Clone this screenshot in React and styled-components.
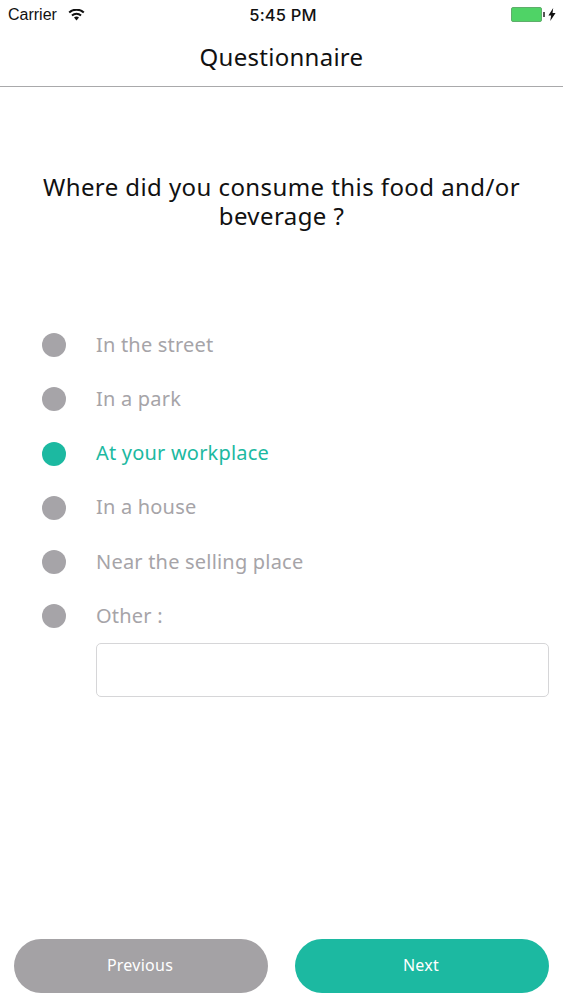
import styled, { createGlobalStyle } from "styled-components";

const options = [
  { label: "In the street" },
  { label: "In a park" },
  { label: "At your workplace", active: true },
  { label: "In a house" },
  { label: "Near the selling place" },
  { label: "Other :" },
];

export default function App() {
  return (
    <>
      <GlobalStyle />
      <Page>
        <StatusBar>
          <StatusLeft>
            Carrier
            <svg width="17" height="12" viewBox="0 0 17 12">
              <path d="M8.5 11.5 6 8.6a3.6 3.6 0 0 1 5 0zM4.6 7.2 3.3 5.7a7.8 7.8 0 0 1 10.4 0l-1.3 1.5a5.8 5.8 0 0 0-7.8 0zM1.9 4.2.5 2.7a12 12 0 0 1 16 0l-1.4 1.5a10 10 0 0 0-13.2 0z" fill="#111" />
            </svg>
          </StatusLeft>
          <StatusTime>5:45 PM</StatusTime>
          <StatusRight>
            <Battery />
            <BatteryTip />
            <svg width="8" height="13" viewBox="0 0 7 12">
              <path d="M4.6 0 0.2 6.9h2.5L1.9 12 6.8 4.7H4z" fill="#111" />
            </svg>
          </StatusRight>
        </StatusBar>
        <Header>Questionnaire</Header>
        <Question>Where did you consume this food and/or beverage ?</Question>
        <OptionList>
          {options.map((o) => (
            <Option key={o.label}>
              <Dot $active={o.active} />
              <OptionLabel $active={o.active}>{o.label}</OptionLabel>
            </Option>
          ))}
        </OptionList>
        <OtherInput />
        <Footer>
          <NavButton>Previous</NavButton>
          <NavButton $primary>Next</NavButton>
        </Footer>
      </Page>
    </>
  );
}

const GlobalStyle = createGlobalStyle`
  html, body {
    margin: 0;
    padding: 0;
    background: #fff;
  }
`;

const Page = styled.div`
  width: 563px;
  height: 1000px;
  display: flex;
  flex-direction: column;
  font-family: "Noto Sans", "Liberation Sans", sans-serif;
  overflow: hidden;
`;

const StatusBar = styled.div`
  height: 29px;
  display: grid;
  grid-template-columns: 1fr auto 1fr;
  align-items: center;
  padding: 0 7px 0 8px;
  font-family: "Liberation Sans", sans-serif;
  font-size: 16px;
  color: #111;
`;

const StatusLeft = styled.div`
  display: flex;
  align-items: center;
  gap: 11px;
`;

const StatusTime = styled.div`
  margin-left: 2px;
  font-family: "Inter", sans-serif;
  font-weight: 500;
  font-size: 16.5px;
  letter-spacing: 0.15px;
`;

const StatusRight = styled.div`
  display: flex;
  align-items: center;
  justify-content: flex-end;
`;

const Battery = styled.div`
  width: 31px;
  height: 15px;
  box-sizing: border-box;
  border: 1px solid #5fae6b;
  border-radius: 2px;
  background: #4fd366;
`;

const BatteryTip = styled.div`
  width: 2px;
  height: 5px;
  background: #555;
  margin: 0 3px 0 1px;
`;

const Header = styled.div`
  height: 58px;
  box-sizing: border-box;
  padding-bottom: 3px;
  display: flex;
  align-items: center;
  justify-content: center;
  border-bottom: 1px solid #a9a9ab;
  font-size: 24px;
  letter-spacing: 0.27px;
  color: #111;
`;

const Question = styled.div`
  margin: 85px 30px 0;
  font-size: 24px;
  line-height: 29px;
  letter-spacing: 0.42px;
  text-align: center;
  color: #111;
`;

const OptionList = styled.div`
  margin-top: 103px;
  padding-left: 42px;
  display: flex;
  flex-direction: column;
  gap: 30.3px;
`;

const Option = styled.div`
  height: 24px;
  display: flex;
  align-items: center;
  gap: 30px;
`;

const Dot = styled.div`
  width: 24px;
  height: 24px;
  border-radius: 50%;
  background: ${(p) => (p.$active ? "#1cb9a1" : "#a6a4a8")};
`;

const OptionLabel = styled.div`
  margin-top: -2px;
  font-size: 20px;
  letter-spacing: 0.2px;
  color: ${(p) => (p.$active ? "#1cb9a1" : "#a6a4a8")};
`;

const OtherInput = styled.div`
  box-sizing: border-box;
  width: 453px;
  height: 54px;
  margin: 15px 0 0 96px;
  border: 1px solid #d6d6d8;
  border-radius: 5px;
`;

const Footer = styled.div`
  margin-top: auto;
  padding: 0 14px 7px;
  display: flex;
  justify-content: space-between;
`;

const NavButton = styled.div`
  box-sizing: border-box;
  width: 254px;
  height: 54px;
  padding: 0 2px 2px 0;
  border-radius: 27px;
  display: flex;
  align-items: center;
  justify-content: center;
  font-size: 16px;
  letter-spacing: 0.25px;
  color: #fff;
  background: ${(p) => (p.$primary ? "#1cb9a1" : "#a4a2a5")};
`;
